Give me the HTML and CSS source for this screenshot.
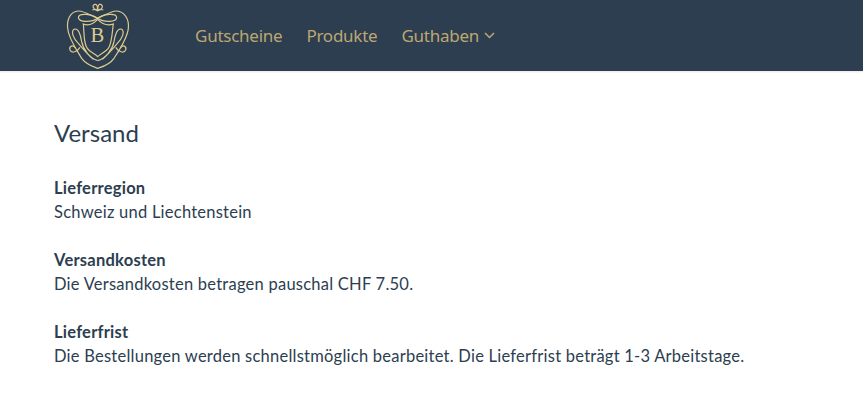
FILE: index.html
```html
<!DOCTYPE html>
<html lang="de">
<head>
<meta charset="utf-8">
<title>Versand</title>
<link rel="stylesheet" href="styles.css">
</head>
<body>
<header class="navbar">
  <a class="logo" href="#" aria-label="Logo">
    <svg width="100" height="71" viewBox="0 0 300 213" fill="none" stroke="#dccb8f" stroke-width="3.600">
      <path d="M143 55C120 45 100 32 85 33C60 35 50 60 53 85C55 115 80 150 95 175C110 195 130 200 143 205C158 200 178 195 192 175C208 150 232 115 235 85C238 60 225 35 200 33C185 32 165 45 143 55Z"/>
      <path d="M143 55C125 42 88 38 85 52C84 68 125 68 143 55C161 68 200 68 200 52C198 38 160 42 143 55Z"/>
      <path d="M100 72C115 78 130 72 143 58C156 72 172 78 190 72C186 100 186 130 175 145C165 158 152 160 143 170C134 160 120 158 112 145C100 130 103 100 100 72Z"/>
      <path d="M143 182C120 175 100 150 95 125C92 105 85 82 72 88C62 95 70 115 85 130C100 148 115 165 130 178"/>
      <path d="M144 182C167 175 187 150 192 125C195 105 202 82 215 88C225 95 217 115 202 130C187 148 172 165 157 178"/>
      <path d="M90 142C82 155 65 162 60 150C56 138 70 133 76 144"/>
      <path d="M197 142C205 155 222 162 227 150C231 138 217 133 211 144"/>
      <path d="M143 33C130 30 124 15 135 13C142 12 143 22 143 33C143 22 145 10 152 13C162 17 156 30 143 33Z"/>
      <path d="M127 30C133 27 153 27 160 30"/>
      <text x="142" y="126" text-anchor="middle" class="logo-letter">B</text>
    </svg>
  </a>
  <nav class="nav">
    <a href="#">Gutscheine</a>
    <a href="#">Produkte</a>
    <a href="#" class="dropdown">Guthaben
      <svg width="11" height="7" viewBox="0 0 11 7" fill="none" stroke="#bda772" stroke-width="1.5"><path d="M1 1l4.500 4.500L10 1"/></svg>
    </a>
  </nav>
</header>
<main class="content">
  <h1>Versand</h1>
  <section class="block">
    <h2>Lieferregion</h2>
    <p>Schweiz und Liechtenstein</p>
  </section>
  <section class="block">
    <h2>Versandkosten</h2>
    <p>Die Versandkosten betragen pauschal CHF 7.50.</p>
  </section>
  <section class="block">
    <h2>Lieferfrist</h2>
    <p>Die Bestellungen werden schnellstmöglich bearbeitet. Die Lieferfrist beträgt 1-3 Arbeitstage.</p>
  </section>
</main>
</body>
</html>
```
FILE: styles.css
```css
* { box-sizing: border-box; }
html, body { margin: 0; padding: 0; }
body {
  background: #fff;
  color: #2c3e50;
  font-family: "Lato", "Liberation Sans", sans-serif;
  font-size: 16.500px;
  line-height: 24px;
}
.navbar {
  display: flex;
  align-items: center;
  height: 71px;
  padding-left: 50px;
  background: #2c3e50;
  box-shadow: 0 1px 2px rgba(0,0,0,.1);
}
.logo { display: block; width: 100px; height: 71px; }
.logo svg { display: block; }
.logo-letter {
  font-family: "Liberation Serif", serif;
  font-size: 62px;
  fill: #dccb8f;
  stroke: none;
}
.nav {
  display: flex;
  gap: 24px;
  margin-left: 45px;
  font-family: "Noto Sans", sans-serif;
  font-size: 17px;
  letter-spacing: -.25px;
}
.nav a { color: #bda772; text-decoration: none; }
.dropdown { display: flex; align-items: center; gap: 5px; }
.content { padding: 47px 54px 0; }
h1 {
  margin: 0 0 28px;
  font-size: 24px;
  font-weight: 400;
  line-height: 30px;
}
.block { margin-bottom: 24px; }
h2 { margin: 0; font-size: 16.500px; font-weight: 700; line-height: 24px; letter-spacing: .24px; }
p { margin: 0; letter-spacing: .24px; }
```
